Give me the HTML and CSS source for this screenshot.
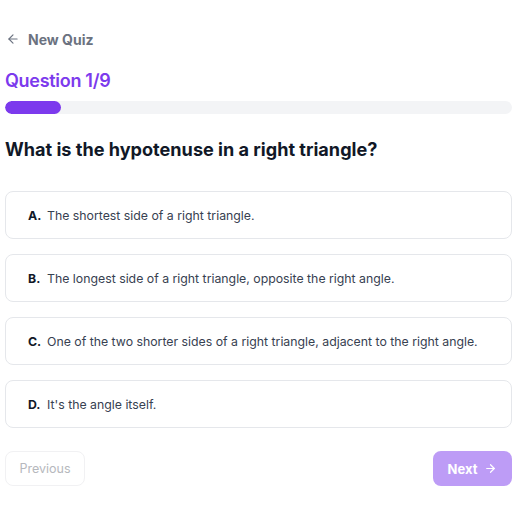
FILE: index.html
```html
<!DOCTYPE html>
<html lang="en">
<head>
<meta charset="utf-8">
<title>New Quiz</title>
<link rel="stylesheet" href="styles.css">
</head>
<body>
<main class="quiz">
  <header class="top">
    <svg class="back-icon" width="14" height="14" viewBox="0 0 24 24" fill="none" stroke="currentColor" stroke-width="2" stroke-linecap="round" stroke-linejoin="round"><path d="M19 12H5"/><path d="M12 19l-7-7 7-7"/></svg>
    <span class="top-title">New Quiz</span>
  </header>

  <h2 class="counter">Question 1/9</h2>
  <div class="progress"><div class="progress-fill" style="width: 11.11%"></div></div>

  <h1 class="question">What is the hypotenuse in a right triangle?</h1>

  <ul class="options">
    <li class="option"><span class="letter">A.</span><span class="text">The shortest side of a right triangle.</span></li>
    <li class="option"><span class="letter">B.</span><span class="text">The longest side of a right triangle, opposite the right angle.</span></li>
    <li class="option"><span class="letter">C.</span><span class="text">One of the two shorter sides of a right triangle, adjacent to the right angle.</span></li>
    <li class="option"><span class="letter">D.</span><span class="text">It's the angle itself.</span></li>
  </ul>

  <nav class="actions">
    <button class="btn btn-prev" disabled>Previous</button>
    <button class="btn btn-next" disabled>Next
      <svg width="13" height="13" viewBox="0 0 24 24" fill="none" stroke="currentColor" stroke-width="2.2" stroke-linecap="round" stroke-linejoin="round"><path d="M5 12h14"/><path d="M12 5l7 7-7 7"/></svg>
    </button>
  </nav>
</main>
</body>
</html>
```

FILE: styles.css
```css
* { box-sizing: border-box; }
html, body { margin: 0; padding: 0; background: #ffffff; }
body {
  font-family: "Inter", "Liberation Sans", sans-serif;
  color: #1f2937;
}
.quiz {
  padding: 29px 8px 0 5px;
  display: flex;
  flex-direction: column;
}
.top {
  display: flex;
  align-items: center;
  gap: 8px;
  height: 20px;
  padding-left: 1px;
  color: #6b7280;
}
.back-icon { display: block; }
.top-title {
  font-size: 14px;
  font-weight: 700;
  color: #6b7280;
}
.counter {
  margin: 20px 0 0;
  font-size: 18px;
  line-height: 24px;
  font-weight: 600;
  color: #7c3aed;
  letter-spacing: -0.3px;
}
.progress {
  margin-top: 8px;
  height: 13px;
  border-radius: 999px;
  background: #f3f4f6;
  overflow: hidden;
}
.progress-fill {
  height: 100%;
  background: #7c3aed;
  border-radius: 999px;
}
.question {
  margin: 22px 0 0;
  font-size: 18.1px;
  line-height: 26px;
  font-weight: 700;
  color: #111827;
}
.options {
  list-style: none;
  margin: 29px 0 0;
  padding: 0;
  display: flex;
  flex-direction: column;
  gap: 15px;
}
.option {
  height: 48px;
  border: 1px solid #e5e7eb;
  border-radius: 8px;
  display: flex;
  align-items: center;
  padding: 0 0 0 22px;
  font-size: 12.3px;
  color: #374151;
}
.letter {
  font-weight: 700;
  color: #111827;
  width: 19px;
}
.actions {
  margin-top: 23px;
  display: flex;
  justify-content: space-between;
}
.btn {
  height: 35px;
  border-radius: 8px;
  font-family: inherit;
  font-size: 13px;
  display: flex;
  align-items: center;
  justify-content: center;
  gap: 8px;
}
.btn-prev {
  width: 80px;
  background: #ffffff;
  border: 1px solid #f1f1f3;
  color: #b6b8bd;
  font-weight: 400;
  font-size: 12.5px;
}
.btn-next {
  width: 79px;
  background: #bd9cf6;
  border: none;
  color: #ffffff;
  font-weight: 700;
  gap: 7px;
}
```
